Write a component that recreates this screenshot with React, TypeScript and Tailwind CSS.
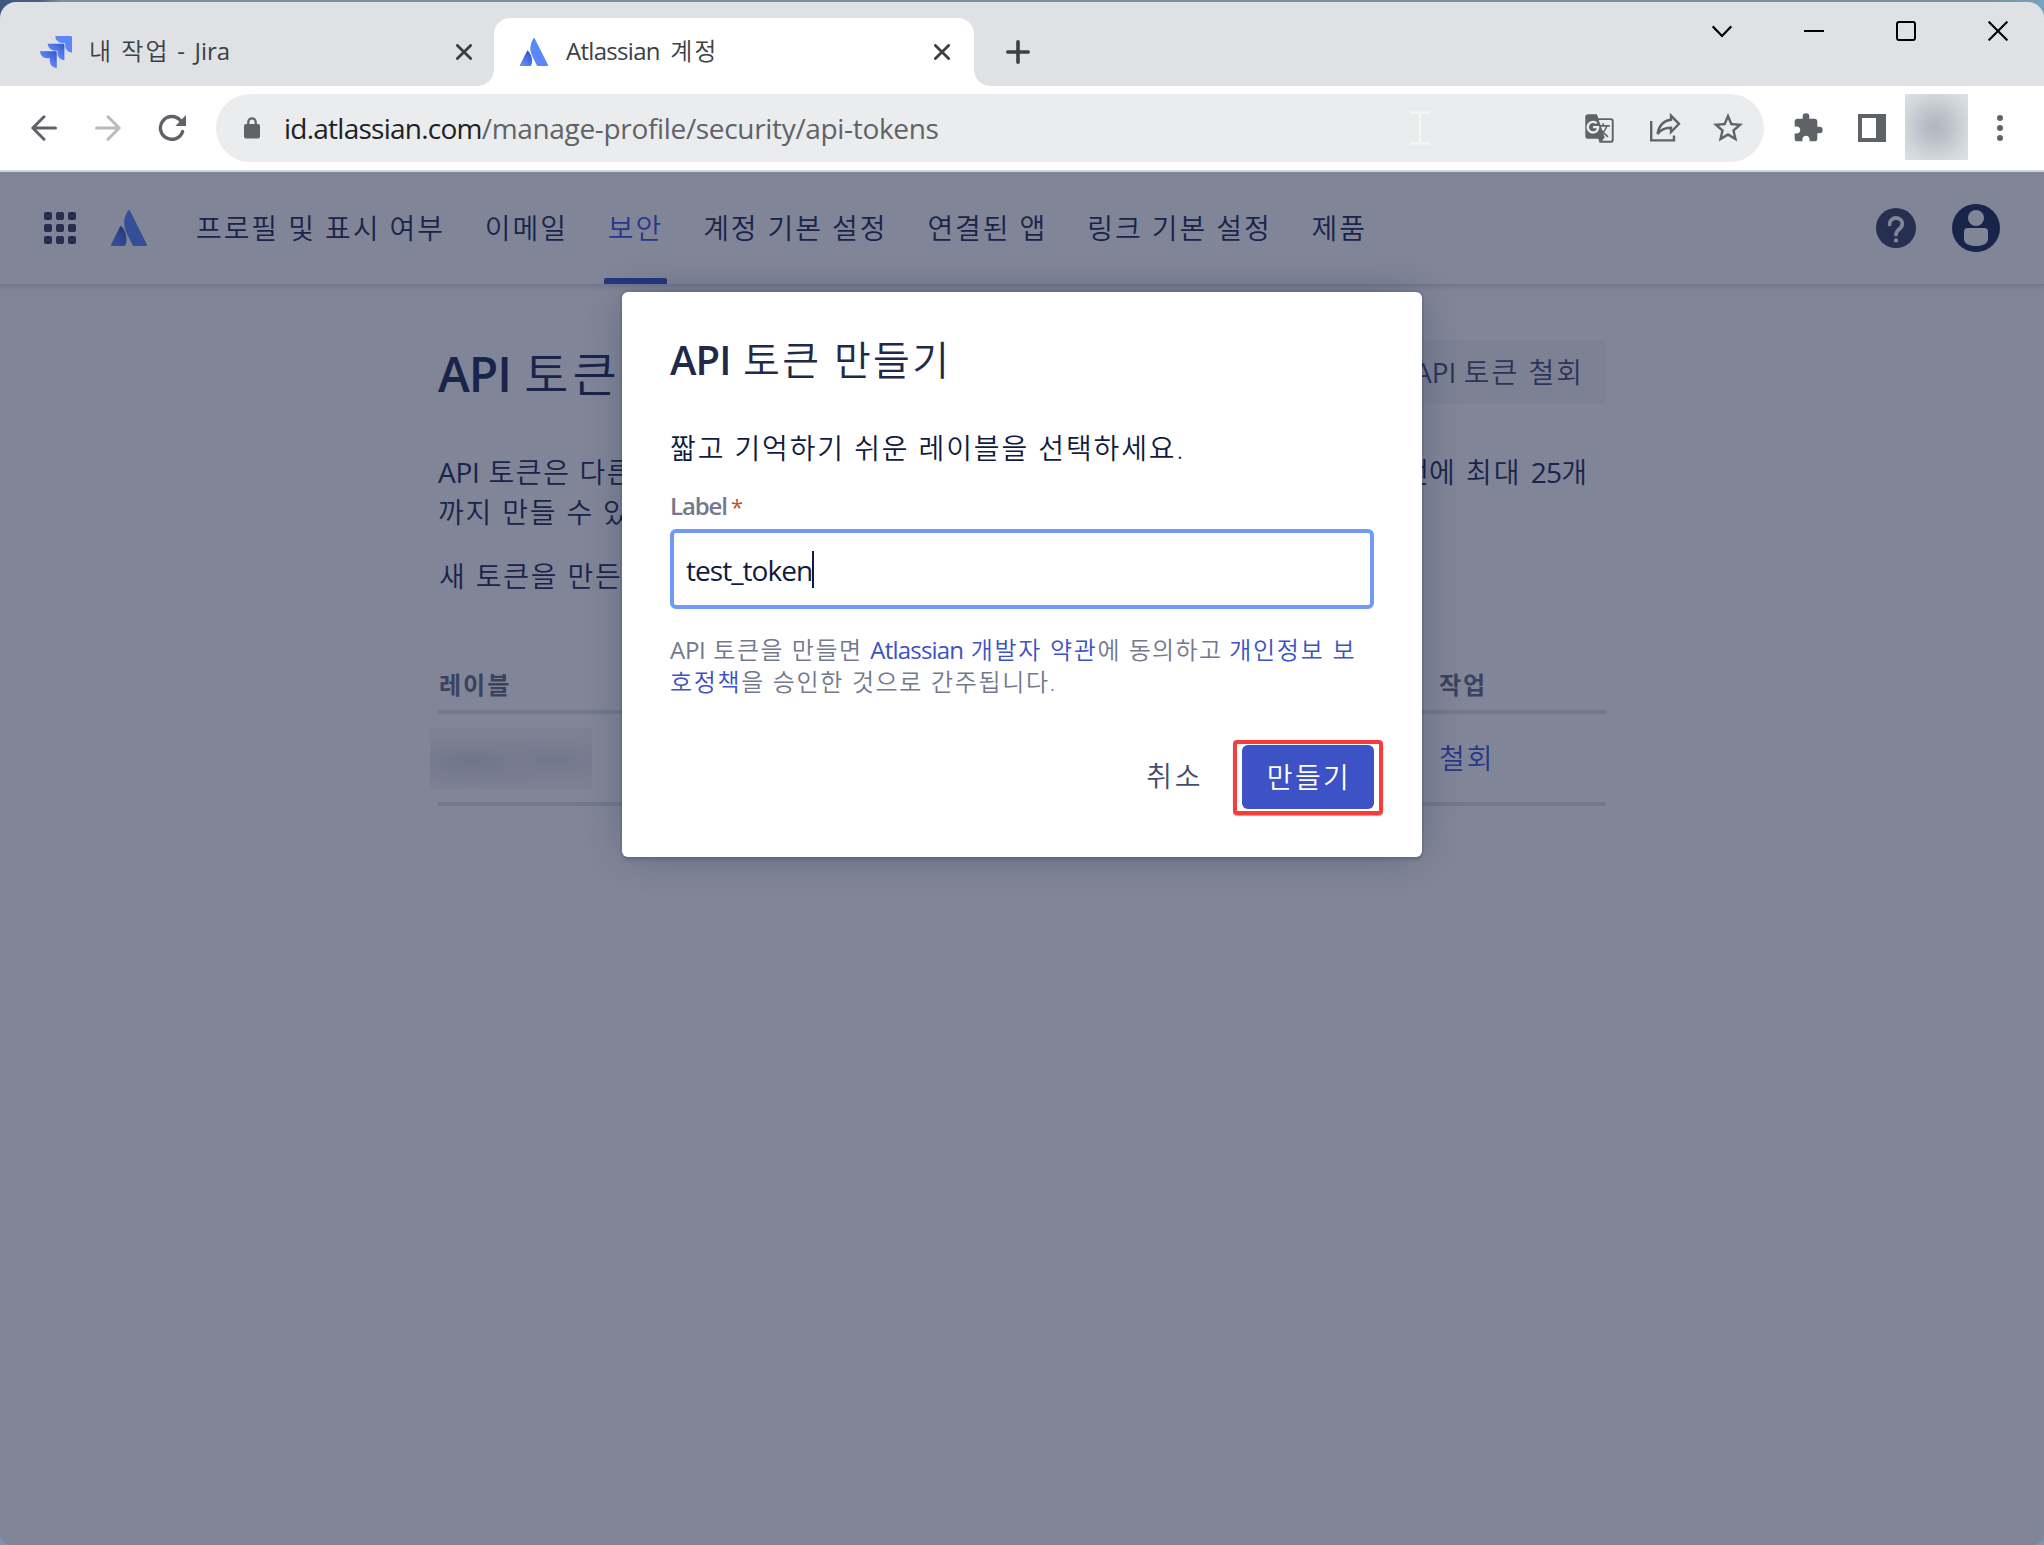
import React from "react";
import { MdExtension, MdStarBorder, MdGTranslate } from "react-icons/md";

type Kids = { children: React.ReactNode; className?: string };

/** Latin run: slightly condensed tracking. */
const L = ({ children, className = "tracking-[-0.3px]" }: Kids) => <span className={className}>{children}</span>;

/** Hangul run: lighter weight, open tracking. */
const K = ({ children, className = "tracking-[2px]" }: Kids) => (
  <span className={`font-[350] ${className}`}>{children}</span>
);

function AtlassianMark({ id, from, to, className }: { id: string; from: string; to: string; className: string }) {
  return (
    <svg viewBox="0 0 24 24" className={className} preserveAspectRatio="none">
      <defs>
        <linearGradient id={id} x1="0.9" y1="0.1" x2="0.3" y2="0.9">
          <stop offset="0" stopColor={from} />
          <stop offset="1" stopColor={to} />
        </linearGradient>
      </defs>
      <path
        fill={`url(#${id})`}
        d="M7.12 11.084a.683.683 0 00-1.16.126L.075 22.974a.703.703 0 00.63 1.018h8.19a.678.678 0 00.63-.39c1.767-3.65.696-9.203-2.406-12.52z"
      />
      <path
        fill={to}
        d="M11.434.386a15.515 15.515 0 00-.906 15.317l3.95 7.9a.703.703 0 00.628.388h8.19a.703.703 0 00.63-1.017L12.63.38a.664.664 0 00-1.196.006z"
      />
    </svg>
  );
}

function JiraMark() {
  return (
    <svg viewBox="0 0 24 24" className="size-8">
      <defs>
        <linearGradient id="jira" x1="1" y1="0" x2="0.45" y2="0.6">
          <stop offset="0" stopColor="#3552c4" />
          <stop offset="1" stopColor="#5b87f8" />
        </linearGradient>
      </defs>
      <path
        fill="url(#jira)"
        d="M11.571 11.513H0a5.218 5.218 0 0 0 5.232 5.215h2.13v2.057A5.215 5.215 0 0 0 12.575 24V12.518a1.005 1.005 0 0 0-1.005-1.005z"
      />
      <path
        fill="url(#jira)"
        d="M17.294 5.757H5.736a5.215 5.215 0 0 0 5.215 5.214h2.129v2.058a5.218 5.218 0 0 0 5.215 5.214V6.758a1.001 1.001 0 0 0-1.001-1.001z"
      />
      <path
        fill="#5b87f8"
        d="M23.013 0H11.455a5.215 5.215 0 0 0 5.215 5.215h2.129v2.057A5.215 5.215 0 0 0 24 12.483V1.005A1.001 1.001 0 0 0 23.013 0Z"
      />
    </svg>
  );
}

const TabClose = () => (
  <svg viewBox="0 0 16 16" className="size-4" fill="none" stroke="#3c4043" strokeWidth="2.8" strokeLinecap="round">
    <path d="M1.4 1.4 14.6 14.6M14.6 1.4 1.4 14.6" />
  </svg>
);

function TabStrip() {
  return (
    <div className="flex h-[84px] rounded-t-[16px] bg-[#dfe1e5] text-[24px] text-[#3c4043]">
      <div className="mt-4 flex h-[68px] w-[494px] items-center pl-10">
        <JiraMark />
        <div className="mb-0.5 ml-[17px] flex-1 leading-[66px] whitespace-pre">
          <K>내 작업</K>
          <L className="tracking-[1.6px]"> - </L>
          <L className="tracking-normal">Jira</L>
        </div>
        <TabClose />
        <div className="w-[22px]" />
      </div>
      <div className="relative mt-4 flex h-[68px] w-[480px] items-center rounded-t-[16px] bg-white">
        <span className="absolute bottom-0 -left-4 size-4 bg-[radial-gradient(circle_at_0_0,#dfe1e5_15.5px,#fff_16px)]" />
        <span className="absolute -right-4 bottom-0 size-4 bg-[radial-gradient(circle_at_100%_0,#dfe1e5_15.5px,#fff_16px)]" />
        <AtlassianMark id="fav" from="#3552c4" to="#5b87f8" className="ml-[26px] size-7" />
        <div className="mb-0.5 ml-[18px] flex-1 leading-[66px] whitespace-pre">
          <L className="tracking-[-0.7px]">Atlassian </L>
          <K className="ml-[5px] tracking-[1.8px]">계정</K>
        </div>
        <TabClose />
        <div className="w-6" />
      </div>
      <svg viewBox="0 0 24 24" className="mt-[38px] ml-8 size-6" fill="none" stroke="#3c4043" strokeWidth="3.6" strokeLinecap="round">
        <path d="M12 1.8v20.4M1.8 12h20.4" />
      </svg>
      <div className="mt-[19px] ml-auto flex h-5 gap-[72px] pr-9">
        <svg viewBox="0 0 20 20" className="size-5" fill="none" stroke="#000" strokeWidth="2.2">
          <path d="M.7 5.3 10 15l9.3-9.7" />
        </svg>
        <svg viewBox="0 0 20 20" className="size-5" stroke="#000" strokeWidth="2">
          <path d="M0 10h20" />
        </svg>
        <svg viewBox="0 0 20 20" className="size-5" fill="none" stroke="#000" strokeWidth="2">
          <rect x="1" y="1" width="18" height="18" rx="2" />
        </svg>
        <svg viewBox="0 0 20 20" className="size-5" stroke="#000" strokeWidth="2.1">
          <path d="M.6.6l18.8 18.8M19.4.6.6 19.4" />
        </svg>
      </div>
    </div>
  );
}

function Toolbar() {
  return (
    <div className="flex h-[86px] items-start border-b-2 border-[#d8dadd] bg-white pt-2 text-[#5f6368]">
      <div className="flex h-[68px] w-[216px] items-center pl-[31px]">
        <svg viewBox="0 0 26 26" className="size-[26px]" fill="none" stroke="#5f6368" strokeWidth="3" strokeLinecap="round" strokeLinejoin="round">
          <path d="M24.5 13H2M13 1.8 1.8 13 13 24.2" />
        </svg>
        <svg viewBox="0 0 26 26" className="ml-[38px] size-[26px]" fill="none" stroke="#bababa" strokeWidth="3" strokeLinecap="round" strokeLinejoin="round">
          <path d="M1.5 13H24M13 1.8 24.2 13 13 24.2" />
        </svg>
        <svg viewBox="0 0 28 28" className="ml-[37px] size-7">
          <path d="M24.6 17.6A11.4 11.4 0 1 1 22.6 6.6" fill="none" stroke="#5f6368" strokeWidth="3.4" strokeLinecap="round" />
          <path d="M28 1v11H17.4z" fill="#5f6368" />
        </svg>
      </div>
      <div className="flex h-[68px] w-[1548px] items-center rounded-full bg-[#ebecee]">
        <svg viewBox="0 0 16 22" className="ml-7 h-[22px] w-4">
          <rect y="7" width="16" height="14.5" rx="2" fill="#5f6368" />
          <path d="M4.3 8V5a3.700 3.700 0 0 1 7.400 0v3" fill="none" stroke="#5f6368" strokeWidth="2.200" />
        </svg>
        <div className="mb-px ml-6 text-[28px] leading-[66px] whitespace-nowrap">
          <L className="tracking-[-0.75px] text-[#202124]">id.atlassian.com</L>
          <L className="tracking-[-0.33px]">/manage-profile/security/api-tokens</L>
        </div>
        <svg viewBox="0 0 20 34" className="ml-auto h-[34px] w-5" fill="none" stroke="#f5f6f6" strokeWidth="2.6">
          <path d="M0 1.5h8l2 1.5 2-1.5h8M10 3v28M0 32.5h8l2-1.5 2 1.5h8" />
        </svg>
        <MdGTranslate className="ml-[154px] size-[31px]" />
        <svg viewBox="0 0 31 30" className="ml-[35px] h-[30px] w-[31px]" fill="none" stroke="#5f6368" strokeWidth="2.4">
          <path d="M1.2 8v19.4H24v-4.8" />
          <path d="M21 2.6 29 10.8 21 19v-4.2c-6.400 0-10.600 2-13.400 6.200C8.600 14 12.600 7.800 21 6.700z" />
        </svg>
        <MdStarBorder className="mr-[18px] ml-[29px] size-[36px]" />
      </div>
      <MdExtension className="mt-[18px] ml-[28px] size-[32px]" />
      <span className="mt-5 ml-[34px] h-7 w-7 border-4 border-r-[10px] border-[#5f6368]" />
      <span className="ml-[19px] h-[66px] w-[63px] bg-[#dfe3e6] bg-[radial-gradient(ellipse_at_48%_50%,#aeb6c1_0%,#bec4cb_35%,#cfd5d9_65%,#dfe3e6_100%)]" />
      <span className="mt-[21px] ml-[29px] flex flex-col gap-1">
        <i className="size-1.5 rounded-full bg-[#5f6368]" />
        <i className="size-1.5 rounded-full bg-[#5f6368]" />
        <i className="size-1.5 rounded-full bg-[#5f6368]" />
      </span>
    </div>
  );
}

const NAV = ["프로필 및 표시 여부", "이메일", "보안", "계정 기본 설정", "연결된 앱", "링크 기본 설정", "제품"];

function SiteNav() {
  return (
    <nav className="flex h-[114px] items-center border-b-2 border-[#73788d] text-[28px] text-[#19244a] shadow-[0_1px_4px_rgba(60,66,95,0.2)]">
      <div className="ml-11 grid grid-cols-3 gap-1">
        {Array.from({ length: 9 }, (_, i) => (
          <i key={i} className="size-2 rounded-[2px] bg-[#262f50]" />
        ))}
      </div>
      <AtlassianMark id="brand" from="#26367f" to="#354f97" className="ml-[35px] size-9" />
      <ul className="ml-[49px] flex h-full gap-10 whitespace-nowrap">
        {NAV.map((label) => (
          <li key={label} className={label === "보안" ? "relative leading-[112px] text-[#27378b]" : "leading-[112px]"}>
            <K className="tracking-[1.9px]">{label}</K>
            {label === "보안" && <span className="absolute -right-1 bottom-0 -left-1 h-1.5 rounded-t-[2px] bg-[#26367f]" />}
          </li>
        ))}
      </ul>
      <svg viewBox="0 0 40 40" className="ml-auto size-10">
        <circle cx="20" cy="20" r="20" fill="#262f50" />
        <path d="M13.600 16.400C13.600 12.600 16.400 10 20 10s6.300 2.500 6.300 6c0 4.800-6.300 5.600-6.300 10.600" fill="none" stroke="#808597" strokeWidth="3.800" strokeLinecap="round" />
        <circle cx="20" cy="32.400" r="2.200" fill="#808597" />
      </svg>
      <svg viewBox="0 0 48 48" className="mr-11 ml-9 size-12">
        <circle cx="24" cy="24" r="24" fill="#19244a" />
        <circle cx="24" cy="14" r="8" fill="#808597" />
        <path d="M12 27.500a3.500 3.500 0 0 1 3.500-3.500h17a3.500 3.500 0 0 1 3.500 3.500V35c0 4.500-5 7-12 7s-12-2.500-12-7z" fill="#808597" />
      </svg>
    </nav>
  );
}

function TokensPage() {
  return (
    <main className="mx-auto w-[1168px] text-[28px] whitespace-nowrap text-[#19244a]">
      <div className="flex h-[166px] items-start justify-between pt-[54px]">
        <h1 className="text-[48px] leading-[68px]">
          <L className="font-semibold tracking-[-1px]">API </L>
          <K className="ml-[2px] tracking-[4px]">토큰</K>
        </h1>
        <button className="h-16 rounded-[6px] bg-[#7c8194] pr-[22px] pl-6 leading-[63px] text-[#2c3557]">
          <K>모든 </K>
          <L className="font-medium">API </L>
          <K>토큰 철회</K>
        </button>
      </div>
      <p className="flex h-10 items-center justify-between pr-[17px]">
        <span>
          <L>API </L>
          <K className="ml-[2px] tracking-[1.6px]">토큰은 다른</K>
        </span>
        <span>
          <K>한 </K>
          <K className="mr-[-1px] tracking-[1px]">번</K>
          <K>에 최대 </K>
          <L className="tracking-[-0.8px]">25</L>
          <K>개</K>
        </span>
      </p>
      <p className="h-10 leading-10">
        <K className="tracking-[1.8px]">까지 만들 수 있</K>
      </p>
      <p className="mt-6 h-10 pl-px leading-10">
        <K className="tracking-[1.8px]">새 토큰을 만든</K>
      </p>
      <table className="mt-[66px] w-full table-fixed border-separate border-spacing-0 text-left">
        <thead>
          <tr className="text-[24px] text-[#39425f]">
            <th className="h-[52px] w-[1000px] border-b-4 border-[#73788b] pb-0.5 pl-px leading-[46px] font-bold tracking-[2px]">레이블</th>
            <th className="h-[52px] border-b-4 border-[#73788b] pb-0.5 pl-px leading-[46px] font-bold tracking-[2px]">작업</th>
          </tr>
        </thead>
        <tbody>
          <tr>
            <td className="h-[92px] border-b-4 border-[#73788b] align-middle">
              <span className="-ml-2 block h-[61px] w-[162px] bg-[#7b8093] bg-[radial-gradient(ellipse_at_27%_55%,#6f758a_0%,#767b8f_25%,transparent_55%),radial-gradient(ellipse_at_70%_53%,#6f758a_0%,#767b8f_22%,transparent_52%)]" />
            </td>
            <td className="h-[92px] border-b-4 border-[#73788b] pl-px align-middle leading-[56px] text-[#27378b]">
              <K>철회</K>
            </td>
          </tr>
        </tbody>
      </table>
    </main>
  );
}

function CreateTokenDialog() {
  return (
    <section className="absolute top-[292px] left-[622px] flex h-[565px] w-[800px] flex-col rounded-[6px] bg-white px-12 whitespace-nowrap shadow-[0_0_0_2px_rgba(9,30,66,0.08),0_4px_2px_rgba(9,30,66,0.08),0_0_40px_-6px_rgba(9,30,66,0.31)]">
      <h2 className="mt-10 h-14 text-[40px] leading-14 text-[#1f2a4a]">
        <L className="font-semibold tracking-[-0.9px]">API </L>
        <K className="ml-[3px] tracking-[2.3px]">토큰 만들기</K>
      </h2>
      <p className="mt-10 h-10 text-[28px] leading-10 text-[#0f1c40]">
        <K className="tracking-[1.88px]">짧고 기억하기 쉬운 레이블을 선택하세요.</K>
      </p>
      <label className="mt-[22px] flex h-8 text-[24px] leading-8 text-[#72798d]">
        <L className="font-semibold tracking-[-1.1px]">Label</L>
        <span className="ml-1 text-[22px] text-[#c4502d]">*</span>
      </label>
      <div className="mt-[7px] flex h-20 w-[704px] items-center rounded-[6px] border-4 border-[#719af8] pl-3 text-[28px] text-[#0f1c40]">
        <L className="pt-0.5 leading-[70px] tracking-[-0.95px]">test_token</L>
        <span className="h-[37px] w-0.5 bg-[#0f1c40]" />
      </div>
      <p className="mt-[25px] text-[24px] leading-8 text-[#72798d]">
        <L>API </L>
        <K className="ml-[2px] tracking-[1.5px]">토큰을 만들면 </K>
        <span className="text-[#3c52c5]">
          <L className="tracking-[-0.8px]">Atlassian </L>
          <K className="ml-[2px] tracking-[1.7px]">개발자 약관</K>
        </span>
        <K className="tracking-[1.4px]">에 동의하고 </K>
        <K className="ml-[-1px] tracking-[1.75px] text-[#3c52c5]">개인정보 보</K>
        <br />
        <K className="tracking-[1.65px] text-[#3c52c5]">호정책</K>
        <K className="tracking-[1.65px]">을 승인한 것으로 간주됩니다.</K>
      </p>
      <div className="mt-[42px] -mr-[9px] flex h-[75px] items-start justify-end text-[28px]">
        <button className="mr-[30px] leading-[72px] text-[#424e6b]">
          <K className="tracking-[2.6px]">취소</K>
        </button>
        <span className="flex h-[75px] w-[150px] items-start justify-center rounded-[4px] border-4 border-[#f53d3d] pt-px shadow-[0_1px_1px_rgba(0,0,0,0.35)]">
          <button className="h-16 w-[132px] rounded-[6px] bg-[#3c52c5] pl-0.5 leading-[63px] text-white">
            <K className="tracking-[2.4px]">만들기</K>
          </button>
        </span>
      </div>
    </section>
  );
}

export default function App() {
  return (
    <div className="relative h-[1545px] w-[2044px] overflow-hidden bg-[#7a919e] bg-[linear-gradient(90deg,#3f567e_0,#4a6080_40px,#7a919e_60px,#7a919e_1990px,#78a2bf_2044px)] pt-0.5 [font-family:'Open_Sans','Noto_Sans_CJK_KR',sans-serif]">
      <TabStrip />
      <Toolbar />
      <div className="bg-[#7d95b0]">
        <div className="h-[1373px] rounded-b-[12px] bg-[#808597]">
          <SiteNav />
          <TokensPage />
        </div>
      </div>
      <CreateTokenDialog />
    </div>
  );
}
